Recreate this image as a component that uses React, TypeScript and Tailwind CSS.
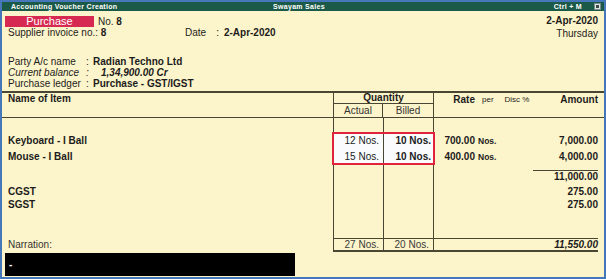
import React from 'react';

const LINE = 'border-[#4a4634]';

type RowProps = {
  h: string;
  name?: React.ReactNode;
  actual?: React.ReactNode;
  billed?: React.ReactNode;
  rate?: React.ReactNode;
  per?: React.ReactNode;
  amount?: React.ReactNode;
  amountClass?: string;
  light?: boolean;
};

const Row: React.FC<RowProps> = ({ h, name, actual, billed, rate, per, amount, amountClass = '', light }) => (
  <div className={`flex ${h}`}>
    <div className="w-[331px] pl-[6px] flex items-center font-bold">{name}</div>
    <div className={`w-[50px] border-l ${LINE} flex items-center justify-end pr-[4px] ${light ? 'bg-[#f9fbfd]' : ''}`}>{actual}</div>
    <div className={`w-[51px] border-x ${LINE} flex items-center justify-end pr-[2px] font-bold ${light ? 'bg-[#f9fbfd]' : ''}`}>{billed}</div>
    <div className="flex-1 flex items-center">
      <div className="w-[41px] text-right font-bold">{rate}</div>
      <div className="ml-[3px] text-[8.5px] font-bold">{per}</div>
      <div className="flex-1 flex justify-end pr-[6px]">
        <div className={`text-right font-bold ${amountClass}`}>{amount}</div>
      </div>
    </div>
  </div>
);

export default function App() {
  return (
    <div className="w-[606px] h-[279px] border-2 border-[#4677bb] bg-[#fcf4ca] flex flex-col overflow-hidden text-[10px] leading-none text-[#1c1c1c] font-['Liberation_Sans',Arial,sans-serif]">
      {/* title bar */}
      <div className="h-[9px] bg-[#1b5a49] text-white text-[7px] font-bold grid grid-cols-[1fr_auto_1fr] items-center pl-[9px] pr-[3px]">
        <span className="tracking-[0.3px]">Accounting Voucher Creation</span>
        <span className="pr-[14px] tracking-[0.3px]">Swayam Sales</span>
        <div className="flex items-center justify-end gap-[12px]">
          <span className="tracking-[0.3px]">Ctrl + M</span>
          <span className="w-[7px] h-[7px] bg-[#dfe6e4] border border-[#7c8c88] flex items-center justify-center">
            <span className="w-[3px] h-[3px] bg-[#3d4a47]" />
          </span>
        </div>
      </div>

      {/* voucher head */}
      <div className="flex">
        <div className="flex-1 flex flex-col">
          <div className="mt-[5px] h-[11px] flex items-center">
            <div className="ml-[3px] w-[89px] h-[11px] bg-[#d62a52] text-white text-[11px] flex items-center justify-center">Purchase</div>
            <span className="ml-[4px]">No. <b>8</b></span>
          </div>
          <div className="h-[12px] flex items-center pl-[6px]">
            <span className="w-[177px]">Supplier invoice no.: <b>8</b></span>
            <span>Date</span>
            <span className="ml-[10px]">:</span>
            <b className="ml-[5px]">2-Apr-2020</b>
          </div>
          <div className="mt-[17px] flex flex-col pl-[6px]">
            <div className="h-[11px] flex items-center">
              <span className="w-[78px]">Party A/c name</span>
              <span className="w-[7px]">:</span>
              <b>Radian Techno Ltd</b>
            </div>
            <div className="h-[11px] flex items-center italic">
              <span className="w-[78px]">Current balance</span>
              <span className="w-[15px]">:</span>
              <b>1,34,900.00 Cr</b>
            </div>
            <div className="h-[11px] flex items-center">
              <span className="w-[78px]">Purchase ledger</span>
              <span className="w-[7px]">:</span>
              <b>Purchase - GST/IGST</b>
            </div>
          </div>
        </div>
        <div className="flex flex-col items-end pt-[3px] pr-[6px]">
          <div className="h-[13px] flex items-center font-bold">2-Apr-2020</div>
          <div className="h-[13px] flex items-center">Thursday</div>
        </div>
      </div>

      {/* table header */}
      <div className={`mt-[2px] flex h-[27px] border-t-2 border-b ${LINE}`}>
        <div className="w-[331px] pl-[6px] pt-[1px] font-bold h-[11px] flex items-center">Name of Item</div>
        <div className={`w-[101px] border-x ${LINE} flex flex-col`}>
          <div className={`h-[11px] border-b ${LINE} flex items-center justify-center font-bold`}>Quantity</div>
          <div className="flex-1 flex text-[#333]">
            <div className={`w-[49px] border-r ${LINE} flex items-center justify-center`}>Actual</div>
            <div className="flex-1 flex items-center justify-center">Billed</div>
          </div>
        </div>
        <div className="flex-1 flex items-start pt-[1px]">
          <div className="h-[11px] w-[41px] flex items-center justify-end font-bold">Rate</div>
          <div className="h-[11px] ml-[7px] flex items-center text-[8px]">per</div>
          <div className="h-[11px] ml-[11px] flex items-center text-[8px]">Disc %</div>
          <div className="h-[11px] flex-1 flex items-center justify-end pr-[6px] font-bold">Amount</div>
        </div>
      </div>

      {/* body */}
      <div className="flex flex-col h-[120px]">
        <Row h="h-[15px]" />
        <div className="relative">
          <Row h="h-[16px]" name="Keyboard - I Ball" actual="12 Nos." billed="10 Nos." rate="700.00" per="Nos." amount="7,000.00" light />
          <Row h="h-[16px]" name="Mouse - I Ball" actual="15 Nos." billed="10 Nos." rate="400.00" per="Nos." amount="4,000.00" light />
          <div className="absolute left-[330px] top-[-1px] w-[103px] bottom-0 border-2 border-[#e1243c]" />
        </div>
        <Row h="h-[4px]" />
        <Row h="h-[13px]" amount={<span className={`block w-[65px] border-t ${LINE} pt-[1px]`}>11,000.00</span>} />
        <Row h="h-[3px]" />
        <Row h="h-[13px]" name="CGST" amount="275.00" />
        <Row h="h-[13px]" name="SGST" amount="275.00" />
        <div className="flex flex-1">
          <div className="w-[331px]" />
          <div className={`w-[50px] border-l ${LINE}`} />
          <div className={`w-[51px] border-x ${LINE}`} />
        </div>
      </div>

      {/* totals */}
      <div className="flex h-[14px]">
        <div className="w-[331px] pl-[6px] flex items-center text-[#333]">Narration:</div>
        <div className={`flex-1 mr-[6px] flex border-t border-b-2 ${LINE} text-[#3a3a3a]`}>
          <div className={`w-[50px] border-l ${LINE} flex items-center justify-end pr-[4px]`}>27 Nos.</div>
          <div className={`w-[51px] border-x ${LINE} flex items-center justify-end pr-[4px]`}>20 Nos.</div>
          <div className="flex-1 flex items-center justify-end font-bold italic text-[#1c1c1c]">11,550.00</div>
        </div>
      </div>

      <div className="mt-[1px] ml-[3px] w-[290px] h-[23px] bg-black text-white flex items-center pl-[4px] font-bold">-</div>
    </div>
  );
}
